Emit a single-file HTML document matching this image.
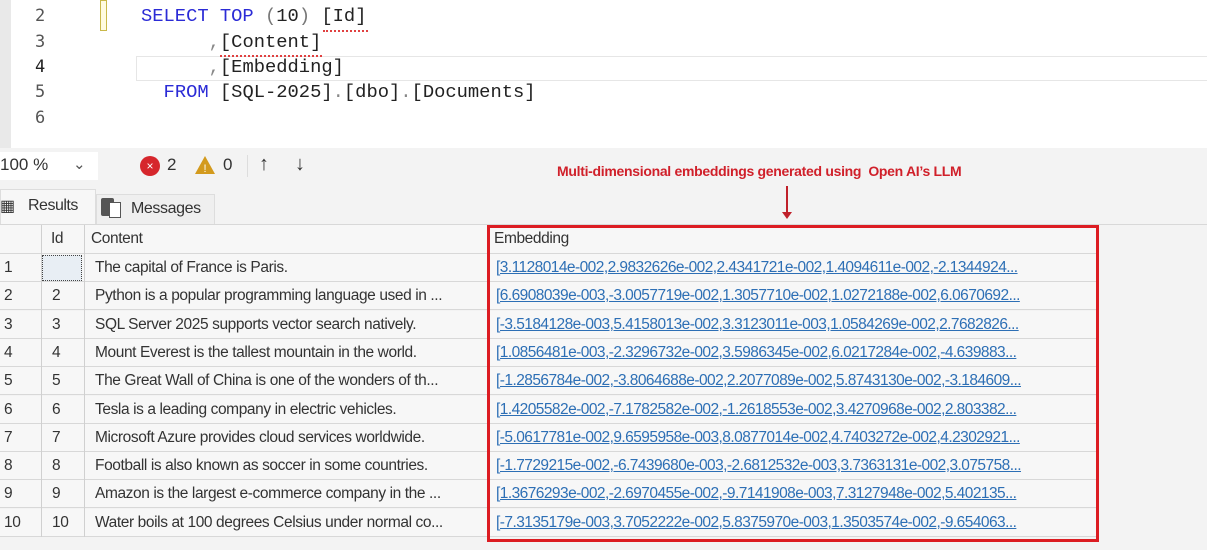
<!DOCTYPE html>
<html><head><style>
body{margin:0;width:1207px;height:550px;overflow:hidden;background:#f3f3f3;font-family:"Liberation Sans",sans-serif;position:relative}
.a{position:absolute}
.code{font-family:"Liberation Mono","DejaVu Sans Mono",monospace;font-size:18.8px;white-space:pre;color:#222}
.ln{color:#555;font-family:"DejaVu Sans Mono",monospace;font-size:17px}
.kw{color:#2b2bd6}
.g{font-size:15.5px;color:#333;letter-spacing:-0.4px;white-space:nowrap}
.row{position:absolute;left:0;width:1098px;height:27px;border-bottom:1px solid #d8d8d8;background:#f7f7f7}
.lnk{color:#2d6fb5;text-decoration:underline}
</style></head><body>
<div class="a" style="left:0;top:0;width:1207px;height:148px;background:#fff"></div>
<div class="a" style="left:0;top:0;width:11px;height:148px;background:#e9e9e9"></div>
<div class="a" style="left:100px;top:0;width:5px;height:29px;border:1px solid #c9b84a;background:#fffbe0"></div>
<div class="a" style="left:136px;top:56px;width:1071px;height:23px;border:1px solid #e6e6e6;border-right:none"></div>
<div class="a ln" style="left:35px;top:6px">2</div>
<div class="a ln" style="left:35px;top:32px">3</div>
<div class="a ln" style="left:35px;top:57px;color:#222">4</div>
<div class="a ln" style="left:35px;top:82px">5</div>
<div class="a ln" style="left:35px;top:108px">6</div>
<div class="a code" style="left:141px;top:5px"><span class="kw">SELECT TOP</span> <span style="color:#777">(</span>10<span style="color:#777">)</span> [Id]</div>
<div class="a" style="left:323px;top:27px;width:45px;height:3px;border-bottom:2px dotted #e04040"></div>
<div class="a code" style="left:141px;top:31px">      <span style="color:#888">,</span>[Content]</div>
<div class="a" style="left:220px;top:52px;width:102px;height:3px;border-bottom:2px dotted #e04040"></div>
<div class="a code" style="left:141px;top:56px">      <span style="color:#888">,</span>[Embedding]</div>
<div class="a code" style="left:141px;top:81px">  <span class="kw">FROM</span> [SQL-2025]<span style="color:#888">.</span>[dbo]<span style="color:#888">.</span>[Documents]</div>

<div class="a" style="left:0;top:152px;width:98px;height:28px;background:#fff"></div>
<div class="a" style="left:0;top:155px;font-size:17px;color:#333">100 %</div>
<div class="a" style="left:73px;top:155px;font-size:15px;color:#555">&#8964;</div>
<div class="a" style="left:140px;top:156px;width:20px;height:20px;border-radius:50%;background:#d6262c;color:#fff;font-size:12px;text-align:center;line-height:20px">×</div>
<div class="a" style="left:167px;top:155px;font-size:17px;color:#333">2</div>
<svg class="a" style="left:194px;top:155px" width="22" height="20"><path d="M11 1L21 19H1Z" fill="#d39a1d"/><text x="11" y="17" font-size="11" text-anchor="middle" fill="#fff" font-family="Liberation Sans">!</text></svg>
<div class="a" style="left:223px;top:155px;font-size:17px;color:#333">0</div>
<div class="a" style="left:247px;top:155px;width:1px;height:22px;background:#ddd"></div>
<div class="a" style="left:259px;top:153px;font-size:20px;color:#333">↑</div>
<div class="a" style="left:295px;top:153px;font-size:20px;color:#333">↓</div>
<div class="a" style="left:557px;top:163px;font-size:14px;font-weight:bold;color:#d0202a;letter-spacing:-0.3px">Multi-dimensional embeddings generated using&nbsp; Open AI’s LLM</div>
<div class="a" style="left:786px;top:186px;width:2px;height:28px;background:#c0202a"></div>
<div class="a" style="left:782px;top:212px;width:0;height:0;border-left:5px solid transparent;border-right:5px solid transparent;border-top:7px solid #c0202a"></div>

<div class="a" style="left:0;top:189px;width:94px;height:34px;background:#f7f7f7;border:1px solid #ddd;border-bottom:none"></div>
<div class="a" style="left:0;top:196px;font-size:16px;color:#333">&#9638;</div>
<div class="a" style="left:28px;top:197px;font-size:16px;color:#333;letter-spacing:-0.5px">Results</div>
<div class="a" style="left:96px;top:194px;width:117px;height:29px;background:#efefef;border:1px solid #ddd;border-bottom:none"></div>
<div class="a" style="left:101px;top:198px;width:13px;height:18px;background:#555;border-radius:2px"></div>
<div class="a" style="left:109px;top:202px;width:10px;height:14px;background:#fff;border:1px solid #555"></div>
<div class="a" style="left:131px;top:200px;font-size:16px;color:#333;letter-spacing:-0.4px">Messages</div>

<div class="a" style="left:0;top:224px;width:1207px;height:1px;background:#d8d8d8"></div>
<div class="row" style="top:225px;height:28px"></div>
<div class="a g" style="left:51px;top:230px">Id</div>
<div class="a g" style="left:91px;top:230px">Content</div>
<div class="a g" style="left:494px;top:230px">Embedding</div>

<div id="rows"></div>
<div class="a" style="left:41px;top:225px;width:1px;height:312px;background:#d0d0d0"></div>
<div class="a" style="left:84px;top:225px;width:1px;height:312px;background:#d0d0d0"></div>
<div class="a" style="left:42px;top:255px;width:40px;height:26px;border:1px dotted #444;background:#e8eef4;box-sizing:border-box"></div>

<div class="a" style="left:487px;top:225px;width:606px;height:311px;border:3px solid #dc1c22"></div>

<script>
var c=["The capital of France is Paris.","Python is a popular programming language used in ...","SQL Server 2025 supports vector search natively.","Mount Everest is the tallest mountain in the world.","The Great Wall of China is one of the wonders of th...","Tesla is a leading company in electric vehicles.","Microsoft Azure provides cloud services worldwide.","Football is also known as soccer in some countries.","Amazon is the largest e-commerce company in the ...","Water boils at 100 degrees Celsius under normal co..."];
var e=["[3.1128014e-002,2.9832626e-002,2.4341721e-002,1.4094611e-002,-2.1344924...","[6.6908039e-003,-3.0057719e-002,1.3057710e-002,1.0272188e-002,6.0670692...","[-3.5184128e-003,5.4158013e-002,3.3123011e-003,1.0584269e-002,2.7682826...","[1.0856481e-003,-2.3296732e-002,3.5986345e-002,6.0217284e-002,-4.639883...","[-1.2856784e-002,-3.8064688e-002,2.2077089e-002,5.8743130e-002,-3.184609...","[1.4205582e-002,-7.1782582e-002,-1.2618553e-002,3.4270968e-002,2.803382...","[-5.0617781e-002,9.6595958e-003,8.0877014e-002,4.7403272e-002,4.2302921...","[-1.7729215e-002,-6.7439680e-003,-2.6812532e-003,3.7363131e-002,3.075758...","[1.3676293e-002,-2.6970455e-002,-9.7141908e-003,7.3127948e-002,5.402135...","[-7.3135179e-003,3.7052222e-002,5.8375970e-003,1.3503574e-002,-9.654063..."];
var h="";
for(var i=0;i<10;i++){var t=Math.round(254+i*28.3);
h+='<div class="row" style="top:'+t+'px"></div>';
h+='<div class="a g" style="left:4px;top:'+(t+5)+'px">'+(i+1)+'</div>';
h+='<div class="a g" style="left:52px;top:'+(t+5)+'px">'+(i+1)+'</div>';
h+='<div class="a g" style="left:95px;top:'+(t+5)+'px">'+c[i]+'</div>';
h+='<div class="a g lnk" style="left:496px;top:'+(t+5)+'px;letter-spacing:-0.55px">'+e[i]+'</div>';}
document.getElementById("rows").outerHTML=h;
</script>
</body></html>
